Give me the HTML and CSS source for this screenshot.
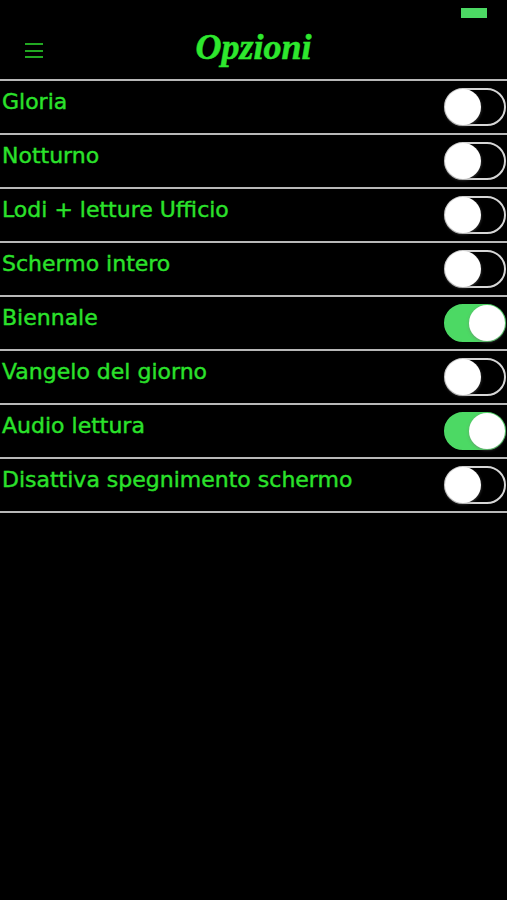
FILE: index.html
```html
<!DOCTYPE html>
<html lang="it">

<head>
    <meta charset="UTF-8">
    <meta name="viewport" content="width=device-width, initial-scale=1.0">
    <title>Opzioni</title>
    <link rel="stylesheet" href="styles.css">
</head>

<body>
    <div class="status-bar">
        <span class="battery"></span>
    </div>

    <header class="nav-bar">
        <button class="menu-btn" aria-label="Menu">
            <span></span>
            <span></span>
            <span></span>
        </button>
        <h1 class="title">Opzioni</h1>
    </header>

    <ul class="options">
        <li class="option">
            <span class="label">Gloria</span>
            <span class="switch"><span class="knob"></span></span>
        </li>
        <li class="option">
            <span class="label">Notturno</span>
            <span class="switch"><span class="knob"></span></span>
        </li>
        <li class="option">
            <span class="label">Lodi + letture Ufficio</span>
            <span class="switch"><span class="knob"></span></span>
        </li>
        <li class="option">
            <span class="label">Schermo intero</span>
            <span class="switch"><span class="knob"></span></span>
        </li>
        <li class="option">
            <span class="label">Biennale</span>
            <span class="switch on"><span class="knob"></span></span>
        </li>
        <li class="option">
            <span class="label">Vangelo del giorno</span>
            <span class="switch"><span class="knob"></span></span>
        </li>
        <li class="option">
            <span class="label">Audio lettura</span>
            <span class="switch on"><span class="knob"></span></span>
        </li>
        <li class="option">
            <span class="label">Disattiva spegnimento schermo</span>
            <span class="switch"><span class="knob"></span></span>
        </li>
    </ul>
</body>

</html>
```

FILE: styles.css
```css
body {
    margin: 0;
    background-color: #000;
    font-family: "DejaVu Sans", sans-serif;
    color: #2be22b;
}

.status-bar {
    height: 20px;
    display: flex;
    justify-content: flex-end;
    align-items: flex-start;
    padding-right: 20px;
}

.battery {
    width: 26px;
    height: 10px;
    margin-top: 8px;
    background-color: #4cd964;
}

.nav-bar {
    height: 59px;
    display: flex;
    align-items: center;
    justify-content: center;
    position: relative;
}

.menu-btn {
    position: absolute;
    left: 25px;
    top: 23px;
    width: 18px;
    padding: 0;
    border: none;
    background: none;
    display: flex;
    flex-direction: column;
    gap: 4.5px;
}

.menu-btn span {
    display: block;
    height: 2px;
    background-color: #22a822;
}

.title {
    margin: 0 0 6px;
    font-family: "Liberation Serif", serif;
    font-style: italic;
    font-weight: bold;
    font-size: 36px;
    color: #2ee82e;
    -webkit-text-stroke: 0.5px #2ee82e;
}

.options {
    list-style: none;
    margin: 0;
    padding: 0;
    border-top: 2px solid #b8b8b8;
}

.option {
    height: 52px;
    display: flex;
    justify-content: space-between;
    padding: 0 1px 0 2px;
    border-bottom: 2px solid #b8b8b8;
}

.label {
    font-size: 22px;
    padding-top: 8px;
    -webkit-text-stroke: 0.4px #2be22b;
}

.switch {
    align-self: center;
    box-sizing: border-box;
    width: 62px;
    height: 38px;
    border: 2px solid #d6d6d6;
    border-radius: 19px;
    display: flex;
    align-items: center;
    justify-content: flex-start;
}

.switch.on {
    background-color: #4cd964;
    border-color: #4cd964;
    justify-content: flex-end;
}

.knob {
    width: 36px;
    height: 36px;
    flex-shrink: 0;
    margin: 0 -1px;
    border-radius: 50%;
    background-color: #fff;
    box-shadow: 0 1px 3px rgba(120, 120, 120, 0.6);
}
```
